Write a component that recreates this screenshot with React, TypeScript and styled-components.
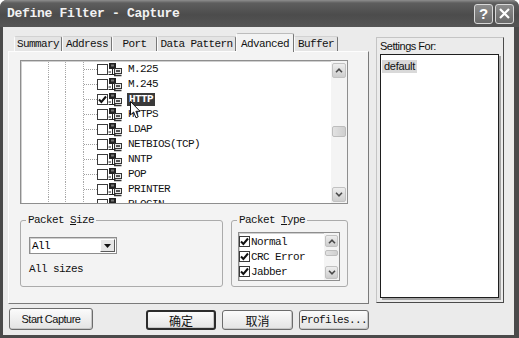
import React from 'react'
import styled, { createGlobalStyle } from 'styled-components'

const MONO = `'Liberation Mono', 'Noto Sans CJK SC', monospace`
const SANS = `'Liberation Sans', Arial, sans-serif`
const CJK = `'Noto Sans CJK SC', sans-serif`

const GlobalStyle = createGlobalStyle`
  html, body {
    margin: 0;
    padding: 0;
    background: #fff;
  }
  * {
    box-sizing: border-box;
  }
`

const Window = styled.div`
  width: 519px;
  height: 338px;
  display: flex;
  flex-direction: column;
  background: #4a4a4a;
  border-radius: 7px 7px 0 0;
  overflow: hidden;
`

const TitleBar = styled.div`
  height: 27px;
  flex: none;
  display: flex;
  align-items: center;
  gap: 2px;
  padding: 0 5px 0 7px;
  background: linear-gradient(to bottom, #8e8e8e 0px, #5e5e5e 3px, #4c4c4c 55%, #555 100%);
`

const Title = styled.div`
  flex: 1;
  color: #f2f2f2;
  font: bold 13px ${MONO};
  letter-spacing: -0.3px;
`

const CaptionButton = styled.div`
  width: 19px;
  height: 20px;
  border: 1px solid #d8d8d8;
  border-radius: 3px;
  background: linear-gradient(to bottom, #8c8c8c, #6a6a6a);
  display: flex;
  align-items: center;
  justify-content: center;
  color: #fff;
  font: bold 15px ${SANS};
`

const Frame = styled.div`
  flex: 1;
  margin: 0 5px 3px 3px;
  background: #ebebeb;
  display: flex;
  align-items: flex-start;
  padding: 6px 0 0 5px;
`

const LeftCol = styled.div`
  width: 361px;
  display: flex;
  flex-direction: column;
`

const TabStrip = styled.div`
  height: 18px;
  display: flex;
  align-items: flex-end;
  padding-left: 6px;
  position: relative;
  z-index: 1;
`

const Tab = styled.div<{ $w: number; $active?: boolean }>`
  width: ${p => p.$w}px;
  height: ${p => (p.$active ? 19 : 15)}px;
  margin-bottom: ${p => (p.$active ? -1 : 0)}px;
  padding-top: ${p => (p.$active ? 3 : 0)}px;
  background: ${p => (p.$active ? '#f3f3f3' : '#e4e4e4')};
  border-top: 1px solid ${p => (p.$active ? '#bcbcbc' : '#d2d2d2')};
  border-left: 1px solid #fbfbfb;
  border-right: 1px solid #777;
  border-radius: 2px 2px 0 0;
  text-align: center;
  font: 11px/14px ${MONO};
  letter-spacing: -0.6px;
  color: #111;
  white-space: nowrap;
`

const Panel = styled.div`
  width: 361px;
  height: 253px;
  background: #f3f3f3;
  border: 1px solid;
  border-color: #fdfdfd #7a7a7a #7a7a7a #fdfdfd;
  padding: 8px 0 0 11px;
`

const Tree = styled.div`
  width: 328px;
  height: 144px;
  display: flex;
  background: #fff;
  border: 1px solid #8e8e8e;
  box-shadow: inset 1px 1px 0 #cfcfcf;
`

const TreeItems = styled.div`
  flex: 1;
  position: relative;
  overflow: hidden;
  padding-top: 1px;
`

const TreeRow = styled.div`
  height: 15px;
  display: flex;
  align-items: center;
  padding-left: 27px;
`

const Guide = styled.div<{ $w: number }>`
  width: ${p => p.$w}px;
  align-self: stretch;
  border-left: 1px dotted #a8a8a8;
`

const Branch = styled.div`
  width: 14px;
  align-self: stretch;
  border-left: 1px dotted #a8a8a8;
  display: flex;
  align-items: center;
  &::after {
    content: '';
    flex: 1;
    border-top: 1px dotted #a0a0a0;
  }
`

const Box = styled.div`
  width: 11px;
  height: 11px;
  flex: none;
  background: #fff;
  border: 1px solid #3a3a3a;
  display: flex;
  align-items: center;
  justify-content: center;
`

const ItemLabel = styled.span<{ $selected?: boolean }>`
  margin-left: ${p => (p.$selected ? 5 : 6)}px;
  padding: 0 ${p => (p.$selected ? 2 : 0)}px;
  height: 13px;
  font: ${p => (p.$selected ? 'bold' : 'normal')} 11px/13px ${MONO};
  letter-spacing: -0.6px;
  color: ${p => (p.$selected ? '#fff' : '#111')};
  background: ${p => (p.$selected ? '#3a3a3a' : 'transparent')};
  white-space: nowrap;
`

const Cursor = styled.svg`
  position: absolute;
  left: 109px;
  top: 40px;
`

const ScrollTrack = styled.div<{ $w: number }>`
  width: ${p => p.$w}px;
  flex: none;
  display: flex;
  flex-direction: column;
  padding: 2px 1px 1px 1px;
  background: #f4f4f4;
`

const ScrollButton = styled.div<{ $h: number; $bottom?: boolean }>`
  height: ${p => p.$h}px;
  margin-top: ${p => (p.$bottom ? 'auto' : '0')};
  border: 1px solid #c2c2c2;
  border-radius: 2px;
  background: linear-gradient(to bottom, #eeeeee, #cdcdcd);
  display: flex;
  align-items: center;
  justify-content: center;
`

const Thumb = styled.div<{ $top: number; $h: number }>`
  margin-top: ${p => p.$top}px;
  height: ${p => p.$h}px;
  border: 1px solid #bdbdbd;
  border-radius: 2px;
  background: linear-gradient(to right, #e2e2e2, #cfcfcf);
`

const GroupRow = styled.div`
  display: flex;
  gap: 8px;
  margin-top: 10px;
`

const Group = styled.fieldset<{ $w: number }>`
  width: ${p => p.$w}px;
  height: 73px;
  margin: 0;
  padding: 0 6px;
  border: 1px solid #ababab;
  border-radius: 3px;
`

const Legend = styled.legend`
  margin-left: -1px;
  padding: 0 2px;
  font: 11px/12px ${MONO};
  letter-spacing: -0.6px;
  color: #111;
  & u {
    text-decoration-thickness: 1px;
  }
`

const Combo = styled.div`
  width: 88px;
  height: 17px;
  margin: 11px 0 0 2px;
  display: flex;
  align-items: center;
  background: #fff;
  border: 1px solid #8e8e8e;
  box-shadow: inset 1px 1px 0 #cfcfcf;
  padding: 0 1px 0 2px;
  font: 11px ${MONO};
  letter-spacing: -0.6px;
`

const ComboValue = styled.span`
  flex: 1;
`

const ComboArrow = styled.div`
  width: 15px;
  height: 13px;
  background: #e6e6e6;
  border: 1px solid;
  border-color: #fff #5a5a5a #5a5a5a #fff;
  display: flex;
  align-items: center;
  justify-content: center;
`

const Hint = styled.div`
  margin: 8px 0 0 2px;
  font: 11px/14px ${MONO};
  letter-spacing: -0.6px;
  color: #111;
`

const ListBox = styled.div`
  width: 102px;
  height: 49px;
  margin-top: 6px;
  display: flex;
  background: #fff;
  border: 1px solid #8e8e8e;
  box-shadow: inset 1px 1px 0 #cfcfcf;
`

const ListItems = styled.div`
  flex: 1;
  padding: 1px 0 0 0;
`

const ListRow = styled.div`
  height: 15px;
  display: flex;
  align-items: center;
  font: 11px ${MONO};
  letter-spacing: -0.6px;
  color: #111;
  & > span {
    margin-left: 1px;
  }
`

const ButtonRow = styled.div`
  height: 22px;
  margin-top: 4px;
  padding-left: 1px;
  display: flex;
  align-items: flex-end;
  gap: 6px;
`

const Button = styled.div<{ $w: number; $h: number; $default?: boolean; $font: 'sans' | 'mono' | 'cjk' }>`
  width: ${p => p.$w}px;
  height: ${p => p.$h}px;
  border: ${p => (p.$default ? '2px solid #2c2c2c' : '1px solid #6c6c6c')};
  border-radius: 3px;
  background: linear-gradient(to bottom, #fbfbfb, #e3e3e3);
  box-shadow: inset -1px -1px 0 #c6c6c6;
  display: flex;
  align-items: center;
  justify-content: center;
  color: #111;
  font-size: ${p => (p.$font === 'cjk' ? 12 : 11)}px;
  font-family: ${p => (p.$font === 'mono' ? MONO : p.$font === 'cjk' ? CJK : SANS)};
  letter-spacing: ${p => (p.$font === 'cjk' ? 0 : p.$font === 'mono' ? -0.6 : -0.5)}px;
  &:first-child {
    margin-right: auto;
  }
`

const SettingsGroup = styled.div`
  width: 128px;
  height: 266px;
  margin-left: 7px;
  margin-top: 4px;
  display: flex;
  flex-direction: column;
  border: 1px solid;
  border-color: #c4c4c4 #4a4a4a #4a4a4a #c4c4c4;
  padding: 3px 4px 4px 3px;
`

const SettingsLabel = styled.div`
  height: 13px;
  font: 11px/11px ${SANS};
  letter-spacing: -0.5px;
  color: #111;
`

const SettingsList = styled.div`
  flex: 1;
  background: #fff;
  border: 1px solid #1e1e1e;
  box-shadow: 2px 2px 0 #a4a4a4;
  padding: 1px;
`

const SettingsItem = styled.div`
  display: inline-block;
  height: 13px;
  padding: 0 2px;
  background: #d9d9d9;
  font: 11px/13px ${SANS};
  letter-spacing: -0.3px;
  color: #111;
`

function Check() {
  return (
    <svg width="9" height="9" viewBox="0 0 9 9">
      <path d="M1 4.5 L3.4 7 L8 1.5" fill="none" stroke="#111" strokeWidth="2" />
    </svg>
  )
}

function NetIcon() {
  return (
    <svg width="14" height="14" viewBox="0 0 14 14" style={{ flex: 'none' }}>
      <rect x="1.5" y="0.5" width="6" height="5" fill="#222" stroke="#222" />
      <rect x="3" y="1.5" width="3" height="2" fill="#777" />
      <path d="M4.5 6 V11.5 M0.5 11.5 H7.5 M0.5 9 H3" stroke="#222" fill="none" />
      <rect x="6.5" y="5.5" width="7" height="5" fill="#e8e8e8" stroke="#333" />
      <rect x="8" y="7" width="4" height="2" fill="#555" />
      <path d="M6 12.5 H13.5" stroke="#333" strokeWidth="1.5" />
    </svg>
  )
}

function Chevron({ up }: { up?: boolean }) {
  return (
    <svg width="8" height="5" viewBox="0 0 8 5">
      <path d={up ? 'M1 4.2 L4 1.2 L7 4.2' : 'M1 0.8 L4 3.8 L7 0.8'} fill="none" stroke="#4a4a4a" strokeWidth="1.6" />
    </svg>
  )
}

const treeItems = [
  { name: 'M.225' },
  { name: 'M.245' },
  { name: 'HTTP', checked: true, selected: true },
  { name: 'HTTPS' },
  { name: 'LDAP' },
  { name: 'NETBIOS(TCP)' },
  { name: 'NNTP' },
  { name: 'POP' },
  { name: 'PRINTER' },
  { name: 'RLOGIN' },
]

const tabs = [
  { label: 'Summary', w: 48 },
  { label: 'Address', w: 50 },
  { label: 'Port', w: 45 },
  { label: 'Data Pattern', w: 79 },
  { label: 'Advanced', w: 58, active: true },
  { label: 'Buffer', w: 44 },
]

export default function App() {
  return (
    <>
      <GlobalStyle />
      <Window>
        <TitleBar>
          <Title>Define Filter - Capture</Title>
          <CaptionButton>?</CaptionButton>
          <CaptionButton>
            <svg width="11" height="11" viewBox="0 0 11 11">
              <path d="M1 1 L10 10 M10 1 L1 10" stroke="#fff" strokeWidth="2.2" />
            </svg>
          </CaptionButton>
        </TitleBar>
        <Frame>
          <LeftCol>
            <TabStrip>
              {tabs.map(t => (
                <Tab key={t.label} $w={t.w} $active={t.active}>
                  {t.label}
                </Tab>
              ))}
            </TabStrip>
            <Panel>
              <Tree>
                <TreeItems>
                  {treeItems.map(item => (
                    <TreeRow key={item.name}>
                      <Guide $w={17} />
                      <Guide $w={18} />
                      <Branch />
                      <Box>{item.checked && <Check />}</Box>
                      <NetIcon />
                      <ItemLabel $selected={item.selected}>{item.name}</ItemLabel>
                    </TreeRow>
                  ))}
                  <Cursor width="11" height="18" viewBox="0 0 11 18">
                    <path d="M0.5 0.5 V14 L3.6 11 L6 16.8 L8.2 15.8 L5.9 10.3 H10 Z" fill="#fff" stroke="#111" />
                  </Cursor>
                </TreeItems>
                <ScrollTrack $w={16}>
                  <ScrollButton $h={15}>
                    <Chevron up />
                  </ScrollButton>
                  <Thumb $top={48} $h={11} />
                  <ScrollButton $h={15} $bottom>
                    <Chevron />
                  </ScrollButton>
                </ScrollTrack>
              </Tree>
              <GroupRow>
                <Group $w={203}>
                  <Legend>
                    Packet <u>S</u>ize
                  </Legend>
                  <Combo>
                    <ComboValue>All</ComboValue>
                    <ComboArrow>
                      <svg width="7" height="4" viewBox="0 0 7 4">
                        <path d="M0 0 H7 L3.5 4 Z" fill="#111" />
                      </svg>
                    </ComboArrow>
                  </Combo>
                  <Hint>All sizes</Hint>
                </Group>
                <Group $w={117}>
                  <Legend>
                    Packet <u>T</u>ype
                  </Legend>
                  <ListBox>
                    <ListItems>
                      {['Normal', 'CRC Error', 'Jabber'].map(n => (
                        <ListRow key={n}>
                          <Box>
                            <Check />
                          </Box>
                          <span>{n}</span>
                        </ListRow>
                      ))}
                    </ListItems>
                    <ScrollTrack $w={15}>
                      <ScrollButton $h={12}>
                        <Chevron up />
                      </ScrollButton>
                      <Thumb $top={3} $h={6} />
                      <ScrollButton $h={13} $bottom>
                        <Chevron />
                      </ScrollButton>
                    </ScrollTrack>
                  </ListBox>
                </Group>
              </GroupRow>
            </Panel>
            <ButtonRow>
              <Button $w={84} $h={22} $font="sans">
                Start Capture
              </Button>
              <Button $w={70} $h={20} $font="cjk" $default>
                确定
              </Button>
              <Button $w={71} $h={20} $font="cjk">
                取消
              </Button>
              <Button $w={70} $h={20} $font="mono">
                Profiles...
              </Button>
            </ButtonRow>
          </LeftCol>
          <SettingsGroup>
            <SettingsLabel>Settings For:</SettingsLabel>
            <SettingsList>
              <SettingsItem>default</SettingsItem>
            </SettingsList>
          </SettingsGroup>
        </Frame>
      </Window>
    </>
  )
}
